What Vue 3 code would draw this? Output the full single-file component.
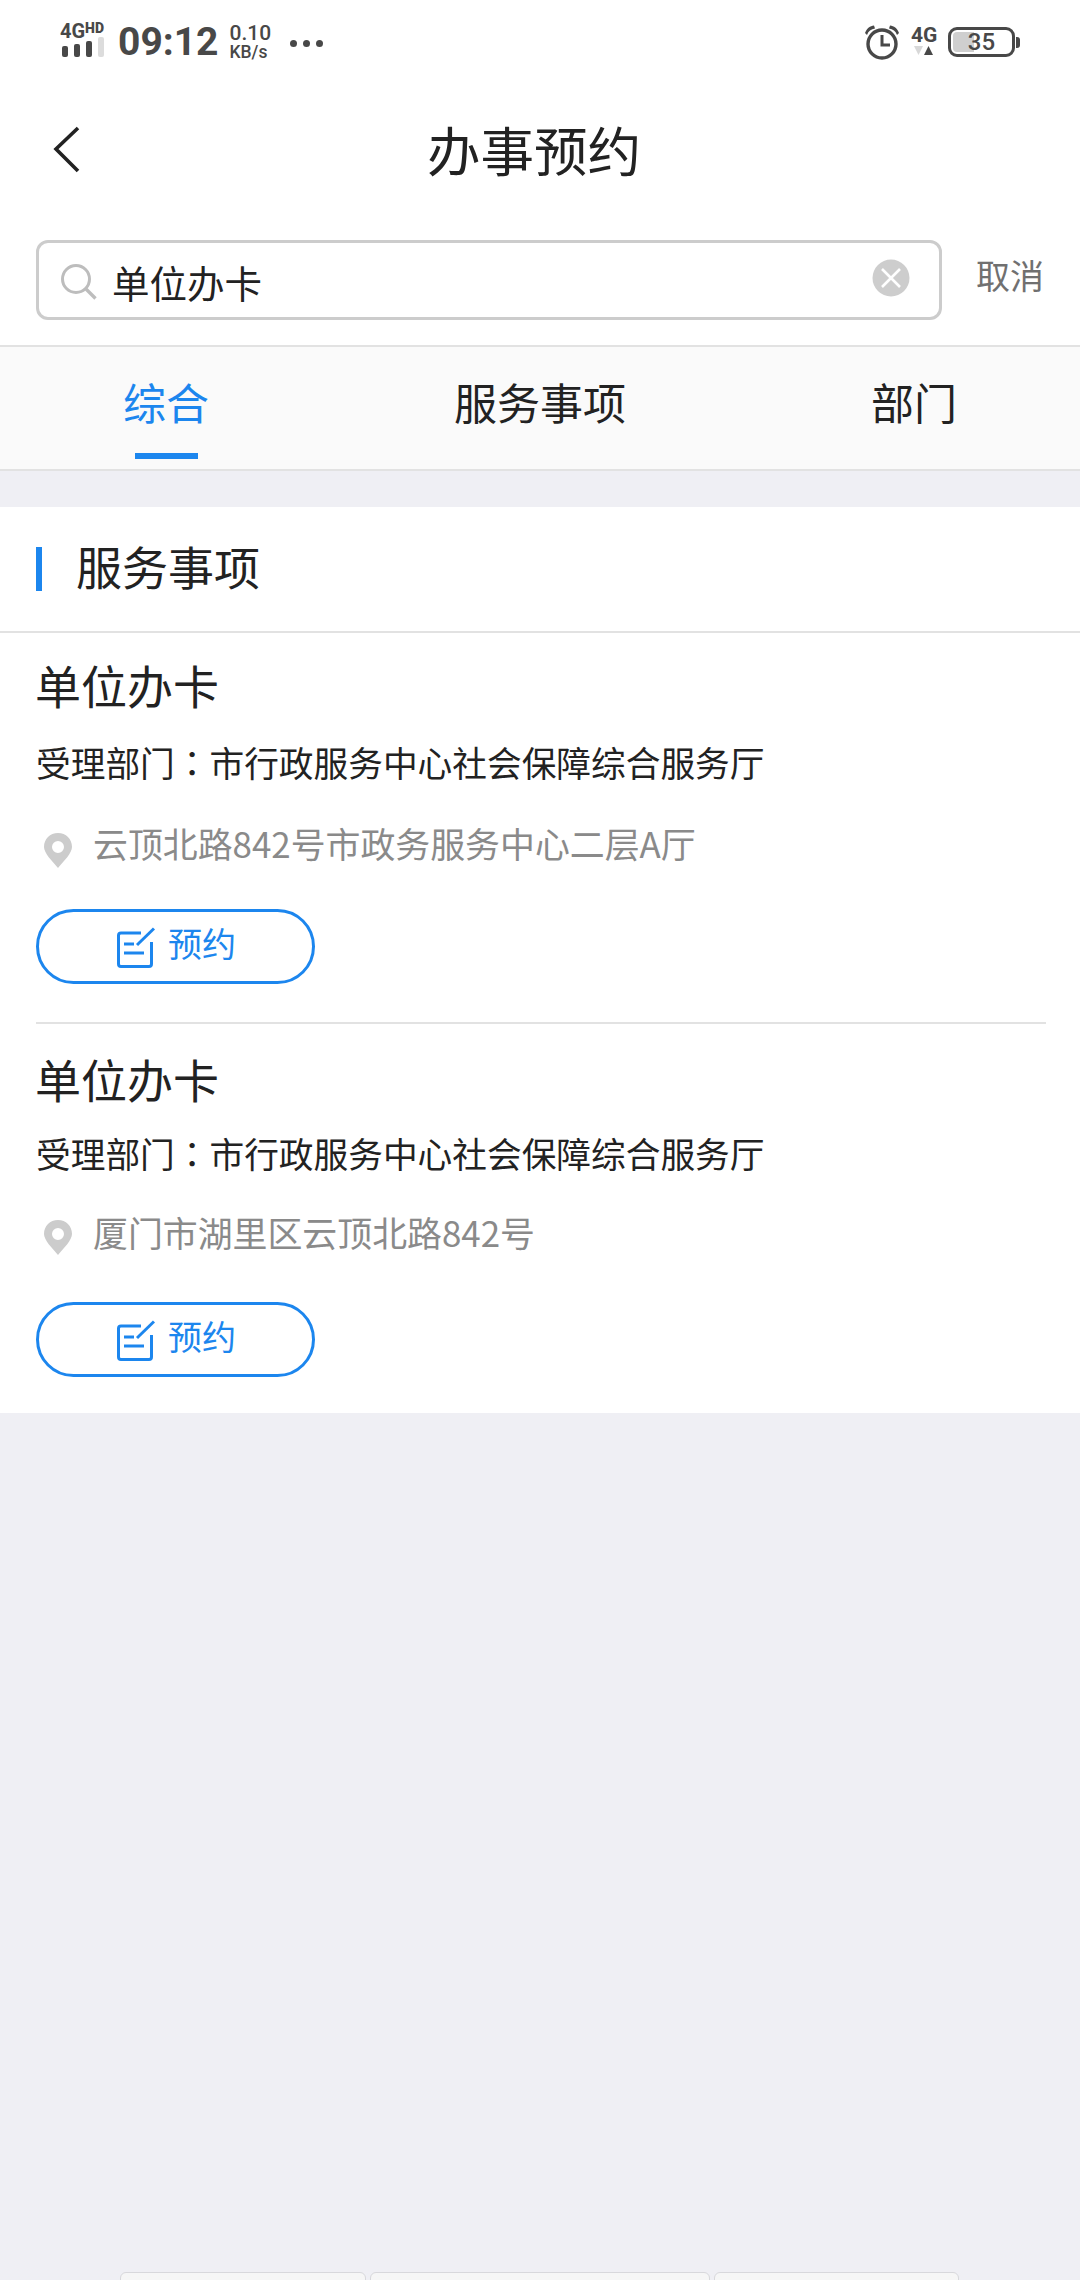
<script setup>
const items = [
  { title: '单位办卡', dept: '市行政服务中心社会保障综合服务厅', addr: '云顶北路842号市政务服务中心二层A厅' },
  { title: '单位办卡', dept: '市行政服务中心社会保障综合服务厅', addr: '厦门市湖里区云顶北路842号' },
]
</script>

<template>
  <div class="page">
    <div class="status">
      <div class="st-left">
        <div class="net">
          <div class="net-label"><span class="n4g">4G</span><span class="nhd">HD</span></div>
          <div class="bars"><i></i><i></i><i></i><i class="off"></i></div>
        </div>
        <span class="time">09:12</span>
        <div class="speed"><span class="s1">0.10</span><span class="s2">KB/s</span></div>
        <div class="dots"><i></i><i></i><i></i></div>
      </div>
      <div class="st-right">
        <svg class="alarm" width="36" height="36" viewBox="0 0 36 36">
          <circle cx="18" cy="20" r="14" fill="none" stroke="#484848" stroke-width="3.4"/>
          <path d="M18 11v10h8" fill="none" stroke="#484848" stroke-width="3"/>
          <path d="M1 9C3 4 6 2 10 1.500L11 4.500C7 5 4.500 7 3 11zM35 9C33 4 30 2 26 1.500L25 4.500C29 5 31.500 7 33 11z" fill="#484848"/>
        </svg>
        <div class="net2">
          <span class="n2">4G</span>
          <svg width="22" height="9" viewBox="0 0 22 9"><path d="M0 0h9L4.500 9z" fill="#d8d8d8"/><path d="M10 9h9L14.500 0z" fill="#484848"/></svg>
        </div>
        <div class="batt">
          <div class="batt-body"><div class="batt-fill"></div><span class="batt-num">35</span></div>
          <div class="batt-cap"></div>
        </div>
      </div>
    </div>

    <div class="nav">
      <svg class="back" width="32" height="54" viewBox="0 0 32 54"><path d="M28 6 L6 27 L28 49" fill="none" stroke="#222" stroke-width="3.600"/></svg>
      <h1 class="title">办事预约</h1>
    </div>

    <div class="search-row">
      <div class="search">
        <svg class="s-icon" width="36" height="36" viewBox="0 0 36 36">
          <circle cx="15" cy="15" r="13.500" fill="none" stroke="#bdbdbd" stroke-width="3"/>
          <path d="M25 25 L34.500 34.500" stroke="#bdbdbd" stroke-width="3.400"/>
        </svg>
        <span class="s-text">单位办卡</span>
        <svg class="clear" width="38" height="38" viewBox="0 0 38 38">
          <circle cx="19" cy="19" r="18.500" fill="#cdcdcd"/>
          <path d="M10 10 L28 28M28 10 L10 28" stroke="#fff" stroke-width="2.600"/>
        </svg>
      </div>
      <span class="cancel">取消</span>
    </div>

    <div class="tabs">
      <div class="tab active">综合<i class="ink"></i></div>
      <div class="tab">服务事项</div>
      <div class="tab">部门</div>
    </div>

    <section class="panel">
      <div class="sec-head"><i class="mark"></i><span>服务事项</span></div>
      <article v-for="(it, i) in items" :key="i" class="item">
        <h2 class="it-title">{{ it.title }}</h2>
        <p class="it-dept">受理部门<span class="colon">：</span>{{ it.dept }}</p>
        <div class="it-addr">
          <svg width="28" height="35" viewBox="0 0 28 35">
            <path fill-rule="evenodd" d="M14 0C6 0 0 6 0 14C0 20 8 28 14 35C20 28 28 20 28 14C28 6 22 0 14 0ZM14 8A6 6 0 1 1 14 20A6 6 0 1 1 14 8Z" fill="#cccccc"/>
          </svg>
          <span>{{ it.addr }}</span>
        </div>
        <div class="btn">
          <svg width="38" height="42" viewBox="0 0 38 42">
            <path d="M24 6H4Q1.500 6 1.500 8.500V37Q1.500 39.500 4 39.500H32Q34.500 39.500 34.500 37V15" fill="none" stroke="#1c86ee" stroke-width="3"/>
            <path d="M20 18 L37 1.500" fill="none" stroke="#1c86ee" stroke-width="3"/>
            <path d="M7 17H17M7 26H27" fill="none" stroke="#1c86ee" stroke-width="3"/>
          </svg>
          <span>预约</span>
        </div>
      </article>
    </section>

    <div class="peek">
      <i class="p1"></i><i class="p2"></i><i class="p3"></i>
    </div>
  </div>
</template>

<style scoped>
.page {
  width: 1080px;
  height: 2280px;
  background: #efeff4;
  display: flex;
  flex-direction: column;
  overflow: hidden;
  font-family: "Noto Sans CJK SC", "Noto Sans", sans-serif;
  color: #222;
}
.status {
  height: 72px;
  flex: none;
  background: #fff;
  display: flex;
  justify-content: space-between;
  padding: 0 60px;
  color: #484848;
  font-family: Roboto, sans-serif;
}
.st-left { display: flex; align-items: flex-start; }
.net { width: 46px; margin-top: 22px; }
.net-label { display: flex; height: 16px; align-items: flex-start; font-weight: 700; line-height: 1; white-space: nowrap; }
.n4g { font-size: 20px; line-height: 18px; }
.nhd { font-size: 14px; line-height: 12px; font-weight: 900; }
.bars { display: flex; gap: 6px; margin-top: -1px; padding-left: 2px; align-items: flex-end; height: 20px; }
.bars i { width: 6px; height: 11px; background: #484848; border-radius: 2px; }
.bars i:nth-child(2) { height: 13px; }
.bars i:nth-child(3) { height: 16px; }
.bars i.off { height: 20px; background: #dcdcdc; }
.time { margin-left: 12px; margin-top: 20px; font-size: 39px; line-height: 44px; font-weight: 700; }
.speed { margin-left: 11px; margin-top: 23px; display: flex; flex-direction: column; font-weight: 500; }
.s1 { font-size: 21px; line-height: 20px; }
.s2 { font-size: 17.500px; line-height: 18px; }
.dots { display: flex; gap: 6px; margin-left: 19px; margin-top: 40px; }
.dots i { width: 7px; height: 7px; border-radius: 50%; background: #484848; }
.st-right { display: flex; align-items: flex-start; }
.alarm { margin-top: 24px; }
.net2 { display: flex; flex-direction: column; margin-left: 11px; margin-top: 24px; width: 25px; }
.n2 { font-size: 21px; line-height: 22px; font-weight: 700; }
.net2 svg { margin-top: 0; margin-left: 3px; }
.batt { display: flex; align-items: center; margin-left: 12px; margin-top: 27px; }
.batt-body { position: relative; width: 67px; height: 30px; box-sizing: border-box; border: 3.500px solid #484848; border-radius: 9px; display: flex; align-items: center; justify-content: center; overflow: hidden; }
.batt-fill { position: absolute; left: 2px; top: 2px; bottom: 2px; width: 21px; background: #cfcfcf; border-radius: 4px 0 0 4px; }
.batt-num { position: relative; font-size: 24px; font-weight: 500; line-height: 1; }
.batt-cap { width: 4px; height: 11px; margin-left: 1px; background: #484848; border-radius: 0 3px 3px 0; }

.nav {
  height: 168px;
  flex: none;
  background: #fff;
  display: flex;
  align-items: flex-start;
  padding-left: 50px;
  box-sizing: border-box;
}
.back { margin-top: 50px; flex: none; }
.title { margin: 43px 0 0 345px; font-size: 53.500px; font-weight: 400; line-height: 68px; color: #222; }

.search-row {
  height: 105px;
  flex: none;
  background: #fff;
  display: flex;
  align-items: flex-start;
  padding-left: 36px;
}
.search {
  width: 906px;
  height: 80px;
  box-sizing: border-box;
  border: 3px solid #cccccc;
  border-radius: 12px;
  display: flex;
  align-items: center;
  padding: 0 29px 0 22px;
}
.s-icon { flex: none; margin-top: 4px; }
.s-text { margin-left: 15px; font-size: 37.500px; line-height: 50px; color: #222; flex: 1; margin-top: 4px; }
.clear { flex: none; margin-top: -4px; }
.cancel { margin-left: 34px; margin-top: 13px; font-size: 34px; line-height: 44px; color: #707070; }

.tabs {
  height: 126px;
  flex: none;
  box-sizing: border-box;
  background: #fafafa;
  border-top: 2px solid #e2e2e2;
  border-bottom: 2px solid #e2e2e2;
  display: grid;
  grid-template-columns: repeat(3, 374px);
  justify-content: center;
}
.tab {
  position: relative;
  text-align: center;
  font-size: 43px;
  line-height: 60px;
  padding-top: 24px;
  color: #222;
}
.tab.active { color: #1c86ee; }
.ink { position: absolute; left: 50%; margin-left: -31px; bottom: 10px; width: 63px; height: 6px; background: #1c86ee; }

.panel { margin-top: 36px; background: #fff; flex: none; }
.sec-head {
  height: 126px;
  box-sizing: border-box;
  border-bottom: 2px solid #e2e2e2;
  display: flex;
  align-items: center;
  padding-left: 36px;
  font-size: 46px;
}
.sec-head span { margin-bottom: 8px; }
.mark { width: 6px; height: 44px; background: #1c86ee; margin-right: 34px; }
.item {
  margin: 0 34px 0 36px;
  height: 389px;
  box-sizing: border-box;
  padding-top: 20px;
}
.item + .item { height: 391px; border-top: 2px solid #e2e2e2; padding-top: 23px; }
.it-title { margin: 0 0 0 -1px; font-size: 46px; font-weight: 400; line-height: 62px; color: #222; }
.it-dept { margin: 22px 0 0; font-size: 34.700px; line-height: 50px; color: #222; }
.item + .item .it-dept { margin-top: 19px; }
.colon { font-family: "Noto Sans CJK TC", sans-serif; }
.it-addr { display: flex; align-items: center; margin-top: 31px; height: 50px; color: #8a8a8a; font-size: 34.900px; }
.item + .item .it-addr { margin-top: 29px; }
.it-addr svg { margin-left: 8px; margin-top: 14px; flex: none; }
.item + .item .it-addr svg { margin-top: 10px; }
.it-addr span { margin-left: 21px; }
.btn {
  width: 279px;
  height: 75px;
  box-sizing: border-box;
  margin-top: 41px;
  border: 3.500px solid #1c86ee;
  border-radius: 37.500px;
  display: flex;
  align-items: center;
  justify-content: center;
  color: #1c86ee;
  font-size: 34px;
}
.item + .item .btn { margin-top: 45px; }
.btn svg { margin-left: 2px; margin-top: 2px; }
.btn span { margin-left: 13px; margin-top: -8px; line-height: 44px; }

.peek { margin-top: auto; height: 8px; flex: none; display: flex; gap: 4px; padding-left: 120px; }
.peek i { height: 12px; background: #f6f6f6; border: 1px solid #d8d8dc; border-radius: 6px 6px 0 0; box-sizing: border-box; }
.p1 { width: 246px; }
.p2 { width: 340px; }
.p3 { width: 245px; }
</style>
